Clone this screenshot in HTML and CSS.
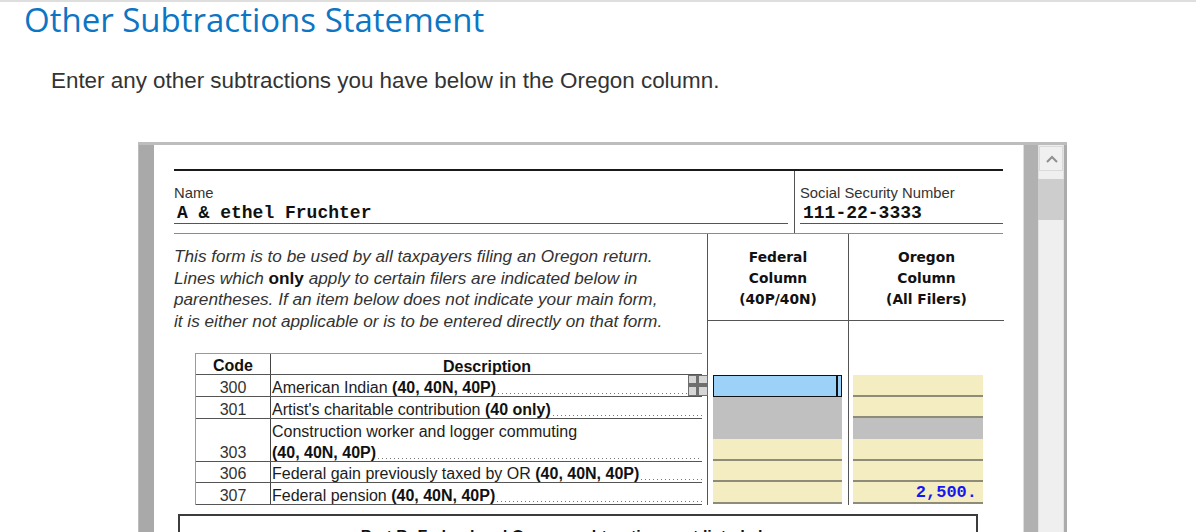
FILE: index.html
```html
<!DOCTYPE html>
<html>
<head>
<meta charset="utf-8">
<link rel="stylesheet" href="styles.css">
</head>
<body>
<div class="topline"></div>
<h1 class="title">Other Subtractions Statement</h1>
<p class="intro">Enter any other subtractions you have below in the Oregon column.</p>
<div class="frame">
  <div class="frame-left"></div>
  <div class="sheet">
    <div class="idrow">
      <div class="idcell name">
        <div class="label">Name</div>
        <div class="value">A &amp; ethel Fruchter</div>
      </div>
      <div class="idcell ssn">
        <div class="label">Social Security Number</div>
        <div class="value">111-22-3333</div>
      </div>
    </div>
    <div class="grid">
      <div class="note">This form is to be used by all taxpayers filing an Oregon return.<br>Lines which <b>only</b> apply to certain filers are indicated below in<br>parentheses. If an item below does not indicate your main form,<br>it is either not applicable or is to be entered directly on that form.</div>
      <div class="colhead"><div class="colhead-text">Federal<br>Column<br>(40P/40N)</div></div>
      <div class="colhead"><div class="colhead-text">Oregon<br>Column<br>(All Filers)</div></div>
      <div class="lines">
        <div class="tbl">
          <div class="row head"><div class="code">Code</div><div class="desc center">Description</div></div>
          <div class="row r22"><div class="code">300</div><div class="desc"><div class="ln">American Indian&nbsp;<b>(40, 40N, 40P)</b><span class="dots short"></span></div></div></div>
          <div class="row r22"><div class="code">301</div><div class="desc"><div class="ln">Artist's charitable contribution&nbsp;<b>(40 only)</b><span class="dots"></span></div></div></div>
          <div class="row r43"><div class="code">303</div><div class="desc"><div class="ln">Construction worker and logger commuting</div><div class="ln"><b>(40, 40N, 40P)</b><span class="dots"></span></div></div></div>
          <div class="row r21"><div class="code">306</div><div class="desc"><div class="ln">Federal gain previously taxed by OR&nbsp;<b>(40, 40N, 40P)</b><span class="dots"></span></div></div></div>
          <div class="row r22"><div class="code">307</div><div class="desc"><div class="ln">Federal pension&nbsp;<b>(40, 40N, 40P)</b><span class="dots"></span></div></div></div>
        </div>
        <svg class="plus" width="20" height="21" viewBox="0 0 20 21">
          <rect x="0" y="0" width="20" height="21" fill="#6e6e6e"/>
          <rect x="1" y="1" width="7" height="7" fill="#d6d6d6"/>
          <rect x="11" y="1" width="8" height="7" fill="#d6d6d6"/>
          <rect x="1" y="12" width="7" height="8" fill="#d6d6d6"/>
          <rect x="11" y="12" width="8" height="8" fill="#d6d6d6"/>
        </svg>
      </div>
      <div class="inputs fed">
        <div class="cell focus h22"></div>
        <div class="cell gray h42"></div>
        <div class="cell yellow h22"></div>
        <div class="cell yellow h21"></div>
        <div class="cell yellow h22"></div>
      </div>
      <div class="inputs ore">
        <div class="cell yellow h22"></div>
        <div class="cell yellow h21"></div>
        <div class="cell gray h21"></div>
        <div class="cell yellow h22"></div>
        <div class="cell yellow h21"></div>
        <div class="cell yellow h22 amount">2,500.</div>
      </div>
    </div>
    <div class="partb">Part B: Federal and Oregon subtractions not listed above</div>
  </div>
  <div class="frame-right"></div>
  <div class="scrollbar">
    <div class="sb-btn">
      <svg width="24" height="23" viewBox="0 0 24 23"><polyline points="7,15 12,10 17,15" fill="none" stroke="#8f8f8f" stroke-width="2"/></svg>
    </div>
    <div class="sb-thumb"></div>
  </div>
  <div class="frame-edge"></div>
</div>
</body>
</html>
```
FILE: styles.css
```css
html, body {
  margin: 0;
  padding: 0;
  overflow: hidden;
  background: #fff;
}
body {
  font-family: "Liberation Sans", Arial, sans-serif;
  width: 1196px;
  height: 532px;
}
.topline {
  height: 2px;
  background: #dedede;
}
.title {
  margin: 0;
  padding-left: 24px;
  font-family: "Open Sans", sans-serif;
  font-weight: 500;
  font-size: 33px;
  line-height: 36px;
  color: #0c76c4;
}
.intro {
  margin: 31px 0 0 51px;
  font-size: 22.4px;
  line-height: 24px;
  color: #333;
}
.frame {
  margin: 49px 0 0 138px;
  width: 929px;
  height: 420px;
  border-top: 3px solid #bdbdbd;
  display: flex;
}
.frame-left {
  width: 16px;
  flex: none;
  background: #a9a9a9;
  border-left: 1px solid #bcbcbc;
  box-sizing: border-box;
}
.sheet {
  width: 870px;
  flex: none;
  box-sizing: border-box;
  padding: 24px 20px 0 20px;
  background: #fff;
  border-right: 1px solid #dedede;
}
.frame-right {
  width: 14px;
  flex: none;
  background: #b1b1b1;
}
.scrollbar {
  width: 26px;
  flex: none;
  box-sizing: border-box;
  background: #efefef;
  border-left: 1px solid #e2e2e2;
  border-right: 1px solid #e2e2e2;
  padding-top: 1px;
}
.sb-btn {
  height: 25px;
  margin: 0;
  box-sizing: border-box;
  border: 1px solid #dadada;
  background: #f0f0f0;
}
.sb-btn svg {
  display: block;
}
.sb-thumb {
  margin: 8px -1px 0;
  height: 41px;
  background: #cdcdcd;
}
.frame-edge {
  width: 3px;
  flex: none;
  background: #ababab;
}

/* identity row */
.idrow {
  display: flex;
  height: 65px;
  box-sizing: border-box;
  border-top: 2px solid #1a1a1a;
  border-bottom: 1px solid #8c8c8c;
}
.idcell {
  padding-top: 14px;
  box-sizing: border-box;
}
.idcell.name {
  width: 620px;
}
.idcell.name .value {
  margin-right: 6px;
}
.idcell.ssn {
  flex: 1;
  border-left: 1px solid #555;
  padding-left: 5px;
}
.label {
  font-size: 14.8px;
  line-height: 16px;
  color: #333;
}
.value {
  margin-top: 2px;
  padding-left: 3px;
  font-family: "Liberation Mono", monospace;
  font-weight: bold;
  font-size: 18px;
  line-height: 20px;
  color: #111;
  border-bottom: 1px solid #555;
}

/* main grid */
.grid {
  display: grid;
  grid-template-columns: 533px 141px 156px;
  grid-template-rows: 119px auto;
}
.note {
  padding-top: 12px;
  font-style: italic;
  font-size: 17.2px;
  line-height: 21.6px;
  color: #333;
}
.note b {
  font-style: normal;
  color: #111;
}
.colhead {
  border-left: 1px solid #555;
}
.colhead-text {
  height: 87px;
  box-sizing: border-box;
  padding-top: 13px;
  border-bottom: 1px solid #555;
  text-align: center;
  font-family: "DejaVu Sans", sans-serif;
  font-weight: bold;
  font-size: 13.8px;
  line-height: 21px;
  color: #111;
}
.lines {
  position: relative;
  padding: 0 5px 0 21px;
}
.tbl {
  border-top: 1px solid #9a9a9a;
  border-left: 1px solid #9a9a9a;
}
.row {
  display: flex;
  box-sizing: border-box;
  border-bottom: 1px solid #555;
  font-size: 16px;
  line-height: 17px;
  color: #1c1c1c;
}
.row.head {
  height: 21px;
  font-weight: bold;
  color: #111;
}
.r21 { height: 21px; }
.r22 { height: 22px; }
.r43 { height: 43px; }
.code {
  width: 75px;
  flex: none;
  box-sizing: border-box;
  border-right: 1px solid #444;
  text-align: center;
  display: flex;
  align-items: flex-end;
  justify-content: center;
  color: #333;
}
.head .code {
  color: #111;
}
.desc {
  flex: 1;
  padding-left: 1px;
  display: flex;
  flex-direction: column;
  justify-content: flex-end;
  min-width: 0;
}
.desc.center {
  text-align: center;
}
.head .desc {
  display: block;
  padding-top: 4px;
}
.ln {
  display: flex;
  align-items: flex-end;
  white-space: nowrap;
  height: 21px;
}
.ln b {
  color: #111;
}
.dots {
  flex: 1;
  height: 1px;
  margin: 0 0 2px 2px;
  background-image: linear-gradient(90deg, #777 1px, transparent 1px);
  background-size: 4px 1px;
  background-repeat: repeat-x;
}
.dots.short {
  margin-right: 14px;
}
.plus {
  position: absolute;
  left: 514px;
  top: 22px;
  display: block;
}

/* input columns */
.inputs {
  border-left: 1px solid #555;
  padding-top: 22px;
}
.inputs.fed {
  padding-left: 5px;
}
.inputs.fed .cell {
  width: 129px;
}
.inputs.ore {
  padding-left: 4px;
}
.inputs.ore .cell {
  width: 130px;
}
.cell {
  box-sizing: border-box;
}
.h21 { height: 21px; }
.h22 { height: 22px; }
.h42 { height: 42px; }
.yellow {
  background: #f3edc1;
  border-bottom: 2px solid #8e8b79;
}
.gray {
  background: #c0c0c0;
}
.focus {
  background: #9cd2f8;
  border: 1px solid #111;
  border-right: 4px solid #9cd2f8;
  box-shadow: inset -2px 0 0 #111;
  outline: 1px solid #111;
  outline-offset: -1px;
}
.amount {
  text-align: right;
  padding-right: 6px;
  font-family: "Liberation Mono", monospace;
  font-weight: bold;
  font-size: 17px;
  line-height: 21px;
  color: #1616f5;
}
.partb {
  margin: 9px 0 0 4px;
  width: 800px;
  height: 60px;
  box-sizing: border-box;
  border: 2px solid #3c3c3c;
  padding-top: 12px;
  text-align: center;
  font-weight: bold;
  font-size: 16px;
  color: #111;
}
```
